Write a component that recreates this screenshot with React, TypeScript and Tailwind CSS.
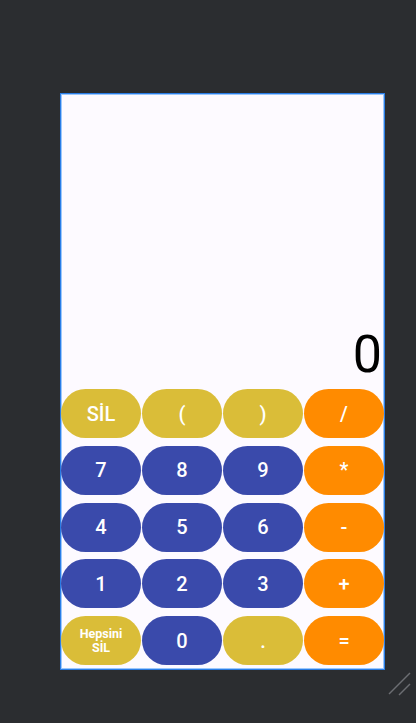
import React from "react";

type Btn = { label: React.ReactNode; color: string; small?: boolean };

const Y = "bg-[#dabd38]";
const B = "bg-[#3a4aab]";
const O = "bg-[#ff8b00]";

const buttons: Btn[] = [
  { label: "SİL", color: Y },
  { label: "(", color: Y },
  { label: ")", color: Y },
  { label: "/", color: O },
  { label: "7", color: B },
  { label: "8", color: B },
  { label: "9", color: B },
  { label: "*", color: O },
  { label: "4", color: B },
  { label: "5", color: B },
  { label: "6", color: B },
  { label: "-", color: O },
  { label: "1", color: B },
  { label: "2", color: B },
  { label: "3", color: B },
  { label: "+", color: O },
  {
    label: (
      <span className="flex flex-col items-center text-[12.5px] leading-[14px] font-bold">
        <span>Hepsini</span>
        <span>SİL</span>
      </span>
    ),
    color: Y,
    small: true,
  },
  { label: "0", color: B },
  { label: ".", color: Y },
  { label: "=", color: O },
];

export default function App() {
  return (
    <div
      className="relative w-[416px] h-[723px] bg-[#2b2d30] pt-[93px] pl-[60px]"
      style={{ fontFamily: "Roboto, 'Noto Sans', sans-serif" }}
    >
      <div className="flex flex-col w-[325px] h-[577px] border border-[#2a7de6] bg-[#fdfaff] shadow-[inset_0_0_0_1px_#9cc7fb]">
        <div className="flex flex-1 items-end justify-end pr-[2px] pb-[4px]">
          <span className="text-[52px] leading-none text-black">0</span>
        </div>
        <div className="grid grid-cols-4 gap-x-[1px] grid-rows-[repeat(5,56.75px)] items-center">
          {buttons.map((b, i) => (
            <div
              key={i}
              className={`${b.color} h-[49px] rounded-full flex items-center justify-center text-white ${
                b.small ? "" : "text-[20px] font-medium"
              }`}
            >
              {b.label}
            </div>
          ))}
        </div>
      </div>
      <svg
        className="absolute left-[386px] top-[670px]"
        width="28"
        height="28"
        viewBox="0 0 28 28"
      >
        <line x1="3" y1="24" x2="24" y2="3" stroke="#6c6e72" strokeWidth="1.5" />
        <line x1="13" y1="25" x2="24" y2="14" stroke="#6c6e72" strokeWidth="1.5" />
      </svg>
    </div>
  );
}
